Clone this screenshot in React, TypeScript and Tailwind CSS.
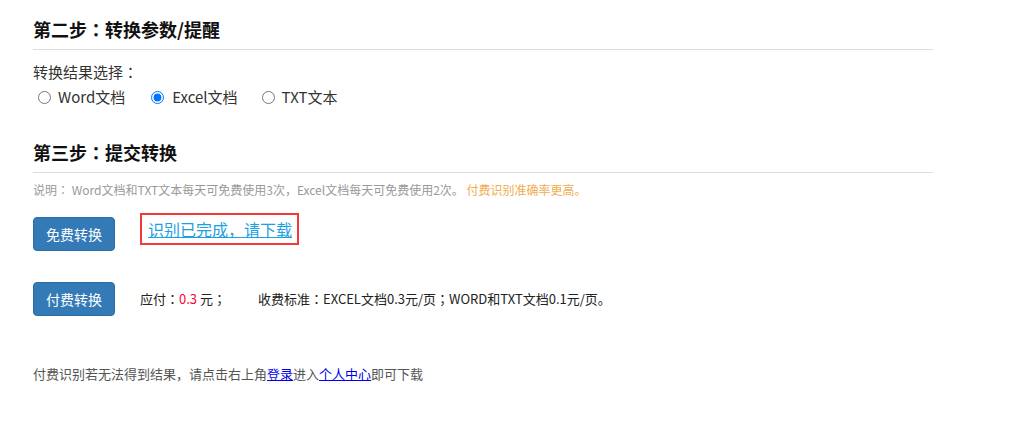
import React from "react";

function C({ ch = "：" }: { ch?: string }) {
  return <span style={{ fontFamily: '"Noto Sans CJK TC", sans-serif' }}>{ch}</span>;
}

export default function App() {
  const font = { fontFamily: '"Microsoft YaHei", "Noto Sans CJK SC", sans-serif' };
  return (
    <div className="w-[1015px] h-[434px] bg-white text-[#333]" style={font}>
      <div className="ml-[33px] w-[900px] pt-[19px]">
        <h3 className="text-[18px] leading-[20px] font-bold text-[#111] pb-[10px] border-b border-[#ddd]">
          第二步<C />转换参数/提醒
        </h3>
        <div className="mt-[12px] text-[15px] leading-[20px]">转换结果选择<C /></div>
        <div className="mt-[5px] flex items-center text-[15px] leading-[20px]">
          <label className="flex items-center">
            <input type="radio" name="fmt" className="ml-[5px] w-[13px] h-[13px] m-0" />
            <span className="ml-[7px]">Word文档</span>
          </label>
          <label className="flex items-center ml-[26px]">
            <input type="radio" name="fmt" defaultChecked className="w-[13px] h-[13px] m-0" />
            <span className="ml-[8px]">Excel文档</span>
          </label>
          <label className="flex items-center ml-[24px]">
            <input type="radio" name="fmt" className="w-[13px] h-[13px] m-0" />
            <span className="ml-[7px]">TXT文本</span>
          </label>
        </div>

        <h3 className="mt-[35px] text-[18px] leading-[20px] font-bold text-[#111] pb-[10px] border-b border-[#ddd]">
          第三步<C />提交转换
        </h3>
        <p className="mt-[9px] text-[12px] leading-[16px] text-[#999]">
          说明<C /> Word文档和TXT文本每天可免费使用3次，Excel文档每天可免费使用2次。{" "}
          <span className="text-[#f0ad4e]">付费识别准确率更高。</span>
        </p>

        <div className="mt-[15px] flex items-start">
          <button className="mt-[4px] w-[82px] h-[34px] rounded-[4px] bg-[#337ab7] border border-[#2e6da4] text-white text-[14px]">
            免费转换
          </button>
          <div className="ml-[25px] w-[159px] h-[32px] border-2 border-[#f23a3a] flex items-center pl-[6px]">
            <a href="#" className="text-[16px] leading-[20px] text-[#1ba1e2] underline">
              识别已完成，请下载
            </a>
          </div>
        </div>

        <div className="mt-[31px] flex items-center">
          <button className="w-[82px] h-[34px] rounded-[4px] bg-[#337ab7] border border-[#2e6da4] text-white text-[14px]">
            付费转换
          </button>
          <div className="ml-[25px] text-[13px] text-[#222]">
            应付<C /><span className="text-[#ff0033]">0.3</span> 元<C ch="；" />
          </div>
          <div className="ml-[32px] text-[13px] text-[#222]">
            收费标准<C />EXCEL文档0.3元/页<C ch="；" />WORD和TXT文档0.1元/页。
          </div>
        </div>

        <p className="mt-[49px] text-[13px] leading-[18px] text-[#555]">
          付费识别若无法得到结果，请点击右上角
          <a href="#" className="text-[#0000ee] underline">登录</a>
          进入
          <a href="#" className="text-[#0000ee] underline">个人中心</a>
          即可下载
        </p>
      </div>
    </div>
  );
}
